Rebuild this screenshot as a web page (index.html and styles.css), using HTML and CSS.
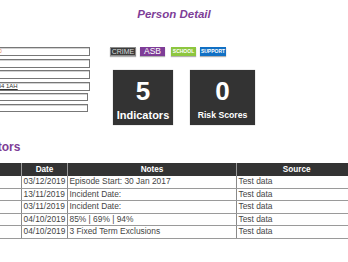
FILE: index.html
```html
<!DOCTYPE html>
<html lang="en">
<head>
  <meta charset="UTF-8" />
  <meta name="viewport" content="width=device-width, initial-scale=1.0" />
  <title>Person Detail</title>
  <link rel="stylesheet" href="styles.css">
</head>

<body>
  <h1 class="page-title">Person Detail</h1>

  <div class="page">
    <div class="detail">
      <div class="fields">
        <div class="field"><span class="field-label">Ref</span><span class="field-box"><span class="alert-text">E10</span></span></div>
        <div class="field"><span class="field-label">Name</span><span class="field-box"></span></div>
        <div class="field"><span class="field-label">DOB</span><span class="field-box"></span></div>
        <div class="field"><span class="field-label">Post</span><span class="field-box"><a class="field-link" href="#">AB4 1AH</a></span></div>
        <div class="field field-short"><span class="field-label">School</span><span class="field-box"></span></div>
        <div class="field field-short"><span class="field-label">Worker</span><span class="field-box"></span></div>
      </div>

      <div class="summary">
        <div class="badges">
          <span class="badge badge-crime">CRIME</span>
          <span class="badge badge-asb">ASB</span>
          <span class="badge badge-school">SCHOOL</span>
          <span class="badge badge-support">SUPPORT</span>
        </div>
        <div class="tiles">
          <div class="tile">
            <div class="tile-value">5</div>
            <div class="tile-label">Indicators</div>
          </div>
          <div class="tile tile-wide">
            <div class="tile-value">0</div>
            <div class="tile-label">Risk Scores</div>
          </div>
        </div>
      </div>
    </div>

    <h2 class="section-title">Indicators</h2>

    <table class="indicators">
      <colgroup>
        <col class="col-type">
        <col class="col-date">
        <col class="col-notes">
        <col class="col-source">
      </colgroup>
      <thead>
        <tr><th class="th-type">Type</th><th>Date</th><th>Notes</th><th>Source</th></tr>
      </thead>
      <tbody>
        <tr><td>CSC</td><td>03/12/2019</td><td>Episode Start: 30 Jan 2017</td><td>Test data</td></tr>
        <tr><td>ASB</td><td>13/11/2019</td><td>Incident Date:</td><td>Test data</td></tr>
        <tr><td>Crime</td><td>03/11/2019</td><td>Incident Date:</td><td>Test data</td></tr>
        <tr><td>Att.</td><td>04/10/2019</td><td>85% | 69% | 94%</td><td>Test data</td></tr>
        <tr><td>Excl.</td><td>04/10/2019</td><td>3 Fixed Term Exclusions</td><td>Test data</td></tr>
      </tbody>
    </table>
  </div>
</body>
</html>
```

FILE: styles.css
```css
html, body {
  overflow: hidden;
}
body {
  margin: 0;
  font-family: "Liberation Sans", Arial, sans-serif;
  color: #444;
  background: #fff;
}
.page-title {
  margin: 0;
  padding-top: 7px;
  font-size: 11.5px;
  line-height: 14px;
  font-style: italic;
  font-weight: bold;
  color: #7e3d97;
  text-align: center;
}
.page {
  margin-left: -40px;
  width: 396px;
}
.detail {
  display: flex;
  gap: 20px;
  margin-top: 26px;
}
.fields {
  width: 130px;
  display: flex;
  flex-direction: column;
  gap: 2.5px;
}
.field {
  display: flex;
  height: 9px;
}
.field-short {
  height: 8px;
}
.field-label {
  width: 30px;
  font-size: 6px;
  line-height: 9px;
}
.field-box {
  flex: 1;
  box-sizing: border-box;
  border: 1px solid #777;
  box-shadow: inset 0 1px 0 #d2d2d2;
  padding-left: 2px;
  font-size: 5px;
  line-height: 7px;
  white-space: nowrap;
}
.field-short .field-box {
  flex: none;
  width: 98px;
}
.alert-text {
  color: #e8874a;
}
.field-link {
  color: #333;
  font-size: 6px;
}
.summary {
  display: flex;
  flex-direction: column;
}
.badges {
  display: flex;
  gap: 4px;
}
.badge {
  width: 26px;
  height: 9px;
  box-sizing: border-box;
  color: #fff;
  text-align: center;
  line-height: 9px;
  box-shadow: 0 1px 1px rgba(0, 0, 0, 0.3);
}
.badge-crime {
  background: #3c3c3c;
  border: 1px solid #8c8c8c;
  color: #ddd;
  font-size: 7px;
  line-height: 7px;
}
.badge-asb {
  width: 25px;
  margin-right: 2px;
  background: #7e3d97;
  font-size: 8.5px;
}
.badge-school {
  width: 25px;
  background: #8dc63f;
  font-size: 5px;
  font-weight: bold;
}
.badge-support {
  background: #1170c4;
  font-size: 5px;
  font-weight: bold;
}
.tiles {
  display: flex;
  gap: 17px;
  margin-top: 14px;
  margin-left: 3px;
}
.tile {
  width: 60px;
  height: 55px;
  box-sizing: border-box;
  padding-top: 8px;
  background: #333;
  color: #fff;
  text-align: center;
  box-shadow: 0 0 1px #999;
}
.tile-wide {
  width: 65px;
}
.tile-value {
  font-size: 26px;
  line-height: 26px;
  font-weight: bold;
}
.tile-label {
  margin-top: 5.5px;
  font-size: 11px;
  line-height: 11px;
  font-weight: bold;
}
.tile-wide .tile-label {
  font-size: 8.7px;
}
.section-title {
  margin: 15px 0 0 3px;
  font-size: 12px;
  line-height: 14px;
  font-weight: bold;
  color: #7e3d97;
}
.indicators {
  margin-top: 9px;
  width: 396px;
  border-collapse: collapse;
  table-layout: fixed;
  font-size: 8.4px;
}
.col-type { width: 61px; }
.col-date { width: 46px; }
.col-notes { width: 169px; }
.col-source { width: 120px; }
.indicators th {
  height: 13px;
  padding: 0;
  background: #333;
  color: #fff;
  font-size: 8.2px;
  border-left: 1px solid #999;
}
.indicators .th-type {
  text-align: left;
  padding-left: 2px;
}
.indicators td {
  padding: 0 1px 0 1.5px;
  line-height: 11.5px;
  border-bottom: 1px solid #9a9a9a;
  border-left: 1px solid #8a8a8a;
  white-space: nowrap;
  overflow: hidden;
}
```
